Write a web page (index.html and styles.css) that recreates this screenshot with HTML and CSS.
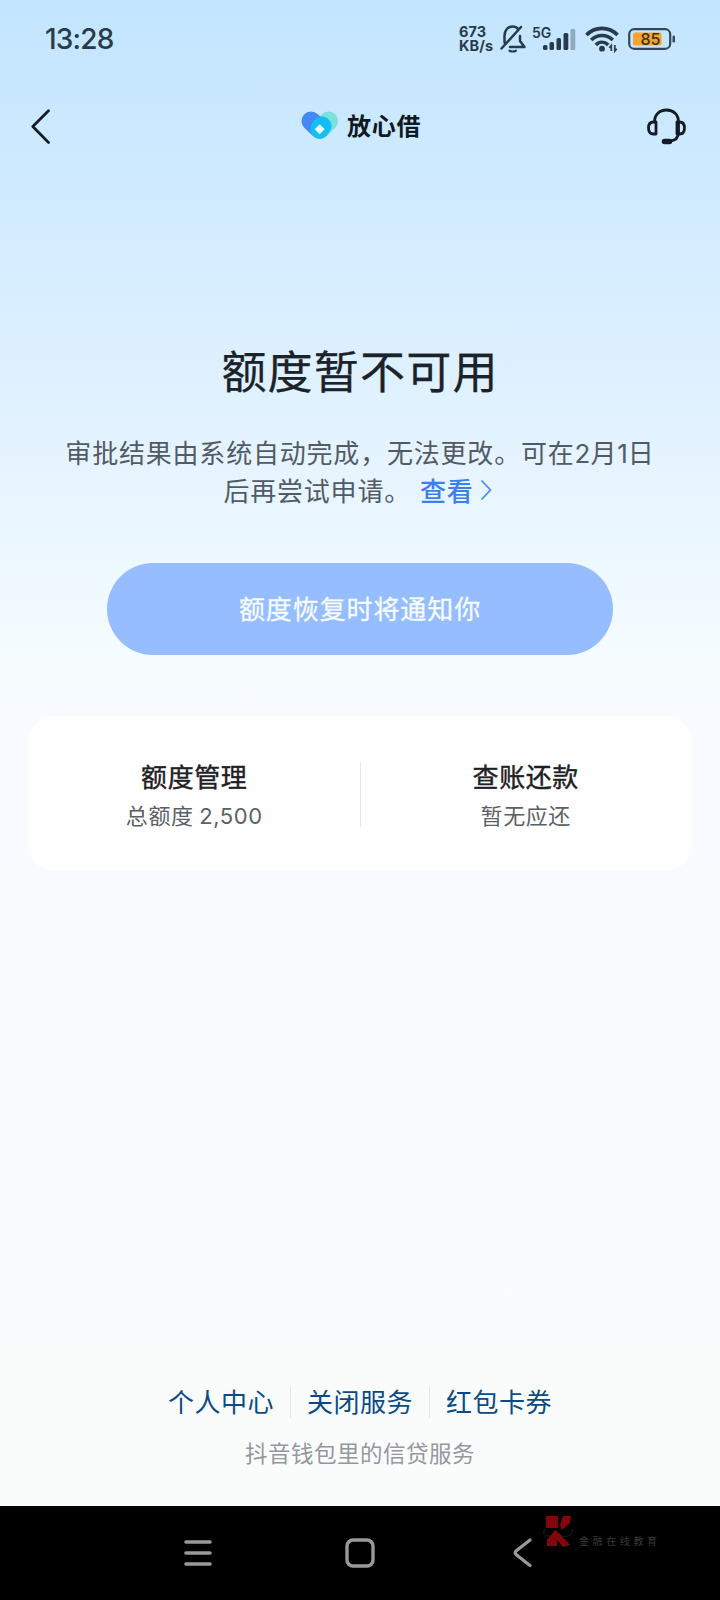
FILE: index.html
```html
<!DOCTYPE html>
<html lang="zh-CN">
<head>
<meta charset="utf-8">
<title>放心借</title>
<link rel="stylesheet" href="styles.css">
</head>
<body>
<div class="screen">
  <header class="status">
    <span class="clock">13:28</span>
    <div class="indicators">
      <div class="speed"><span>673</span><span>KB/s</span></div>
      <svg class="bell" width="26" height="30" viewBox="0 0 26 30" fill="none" stroke="#273b4a" stroke-width="2.500" stroke-linecap="round" stroke-linejoin="round">
        <path d="M4.500 18.500V12C4.500 6 8 2.500 12.500 2.500c2.500 0 4.500 1 5.800 2.800M10 23H24.500L20 17V12M21 3L1.500 24.500"/>
        <path d="M9.500 26.700q3.200 1.600 6.400 0" stroke-width="2.200"/>
      </svg>
      <div class="cell">
        <span class="net">5G</span>
        <svg class="bars" width="33" height="22" viewBox="0 0 33 22" fill="#273b4a">
          <rect x="0" y="16" width="4.500" height="5" rx="1.500"/><rect x="6.500" y="13" width="4.500" height="8" rx="1.500"/><rect x="13.500" y="9" width="4.500" height="12" rx="1.500"/><rect x="20.500" y="4" width="4.800" height="17" rx="1.500"/><rect x="27.500" y="0" width="4.800" height="21" rx="1.500" fill="#8fa9bd"/>
        </svg>
      </div>
      <svg class="wifi" width="34" height="27" viewBox="0 0 34 27" fill="none" stroke="#273b4a" stroke-width="3.600">
        <path d="M1.500 9C10 .2 24 .2 32.500 9M6.200 14C12.500 8 21.500 8 27.800 14M10.800 19C14.500 15.300 19.500 15.300 23.200 19"/>
        <circle cx="17" cy="22.700" r="2.900" fill="#273b4a" stroke="none"/>
        <path d="M26.300 25v-5.500l-2 2.300M29.800 19v6l2-2.300" stroke-width="1.700"/>
      </svg>
      <svg class="battery" width="48" height="22" viewBox="0 0 48 22">
        <rect x="1.200" y="1.200" width="41" height="19.600" rx="5" fill="none" stroke="#33485a" stroke-width="2.200"/>
        <rect x="5" y="4.500" width="28.500" height="13" rx="2" fill="#f5a52d"/>
        <rect x="44.500" y="7.500" width="2.500" height="7" rx="1.200" fill="#33485a"/>
        <text class="charge" x="22.500" y="16.800" text-anchor="middle">85</text>
      </svg>
    </div>
  </header>

  <nav class="topbar">
    <svg width="20" height="36" viewBox="0 0 20 36" fill="none" stroke="#151b22" stroke-width="2.700" stroke-linecap="round" stroke-linejoin="round"><path d="M17.500 2.700L1.800 18.500L17.500 34.500"/></svg>
    <div class="brand">
      <svg width="38" height="30" viewBox="0 0 38 30" fill="none" stroke-linecap="round">
        <path d="M27.500 10L19.500 18" stroke="#78e1dc" stroke-width="19"/>
        <path d="M10 10L18.500 18" stroke="#4588f4" stroke-width="19"/>
        <path d="M21 15L18.700 18.300" stroke="#12bff4" stroke-width="19"/>
        <path d="M18.700 13.300l5 5-5 5-5-5z" fill="#e9fbff"/>
      </svg>
      <span class="brand-name">放心借</span>
    </div>
    <svg width="39" height="37" viewBox="0 0 39 37" fill="none" stroke="#151b22" stroke-width="2.800" stroke-linecap="round" stroke-linejoin="round">
      <path d="M7.500 14C7.500 6.500 12.500 2 19.500 2S31.500 6.500 31.500 14v11M31.500 24c0 6-3 8.800-9 9"/>
      <path d="M9 14v12H6.500q-5 0-5-6t5-6zM30 14v12h2.500q5 0 5-6t-5-6z"/>
      <path d="M17.500 33.500h5" stroke-width="5.500"/>
    </svg>
  </nav>

  <main class="content">
    <h1 class="title">额度暂不可用</h1>
    <p class="desc">审批结果由系统自动完成，无法更改。可在<span class="num">2</span>月<span class="num">1</span>日<br>后再尝试申请。<a class="view">查看<svg width="12" height="22" viewBox="0 0 12 22" fill="none" stroke="#4b8cf0" stroke-width="1.800" stroke-linejoin="round"><path d="M1.500 1.500L10.500 11L1.500 20.500"/></svg></a></p>
    <button class="notify">额度恢复时将通知你</button>
    <section class="card">
      <div class="item"><strong>额度管理</strong><span>总额度 <b class="num">2,500</b></span></div>
      <div class="rule"></div>
      <div class="item"><strong>查账还款</strong><span>暂无应还</span></div>
    </section>
  </main>

  <footer class="footer">
    <div class="links"><a>个人中心</a><a>关闭服务</a><a>红包卡券</a></div>
    <p class="slogan">抖音钱包里的信贷服务</p>
  </footer>

  <div class="sysnav">
    <svg width="28" height="28" viewBox="0 0 28 28" stroke="#999" stroke-width="3.600" stroke-linecap="round"><path d="M2 3h24M2 14h24M2 25h24"/></svg>
    <svg width="30" height="30" viewBox="0 0 30 30" fill="none" stroke="#999" stroke-width="3.400"><rect x="2" y="2" width="26" height="26" rx="6"/></svg>
    <svg width="19" height="30" viewBox="0 0 19 30" fill="none" stroke="#999" stroke-width="3.200" stroke-linecap="round" stroke-linejoin="round"><path d="M17 2L3 13q-1.500 1.700 0 3.400L17 27.500"/></svg>
    <div class="watermark">
      <svg width="32" height="33" viewBox="0 0 32 33" fill="#84060c">
        <path d="M3 1h12v12H3zM17 10L20 1h8l-1 7-8 7zM4 31v-6l8-10 5 4 10 11-7 2-6-7v6z"/>
        <path d="M3 14c-5 4-1 8 5 7M18 21c6 2 13-2 11-7" fill="none" stroke="#202020" stroke-width="1"/>
      </svg>
      <span>金融在线教育</span>
    </div>
  </div>
</div>
</body>
</html>
```
FILE: styles.css
```css
* { box-sizing: border-box; }
body { margin: 0; font-family: "Noto Sans CJK SC", sans-serif; }
svg { display: block; flex: none; }
.screen {
  width: 720px; height: 1600px; display: flex; flex-direction: column;
  background: linear-gradient(#c3e5ff 0, #cbe9ff 130px, #dff1ff 380px, #ebf7ff 540px, #f6fcff 665px, #f8fbff 720px, #f8fbfe 960px, #fafcfc 1400px);
}
.status { height: 78px; padding: 0 44px 0 45px; display: flex; justify-content: space-between; align-items: center; color: #273b4a; }
.clock { font: 500 28px/40px Inter, sans-serif; letter-spacing: -.8px; }
.indicators { display: flex; align-items: center; }
.speed { display: flex; flex-direction: column; width: 42px; font: 700 14.500px/14px Inter, sans-serif; margin-right: -1px; letter-spacing: .1px; }
.cell { display: flex; margin-left: 6px; height: 26px; }
.net { font: 600 14px/14px Inter, sans-serif; width: 11px; }
.bars { margin-top: 3px; }
.wifi { margin-left: 9px; }
.battery { margin-left: 9px; }
.charge { font: 500 16px Inter, sans-serif; fill: #3d321f; }
.topbar { height: 96px; padding: 0 34px 0 31px; display: grid; grid-template-columns: 270px 1fr 39px; align-items: center; }
.brand { display: flex; align-items: center; gap: 8px; }
.brand-name { font-size: 24px; line-height: 34px; font-weight: 700; color: #101820; letter-spacing: .8px; margin-top: -2px; }
.content { display: flex; flex-direction: column; align-items: center; padding-top: 162px; }
.title { margin: 0; font-size: 45px; line-height: 68px; font-weight: 400; letter-spacing: 1.200px; color: #1b2229; -webkit-text-stroke: .25px #1b2229; }
.desc { margin: 29px 0 0; font-size: 26px; line-height: 38px; letter-spacing: .8px; text-align: center; color: #525a66; }
.num { font-family: Inter, sans-serif; font-weight: 400; line-height: 1; }
.desc .num { letter-spacing: 0; }
.view { display: inline-flex; align-items: center; gap: 6px; margin-left: 9px; padding-right: 5px; color: #3c7ff0; font-weight: 500; }
.notify { margin-top: 54px; width: 506px; height: 92px; border: 0; padding: 0 0 3px; border-radius: 46px; background: #96bdff; color: #f7fcff; font: 400 26px "Noto Sans CJK SC", sans-serif; letter-spacing: .9px; -webkit-text-stroke: .3px #f7fcff; }
.card { margin-top: 61px; width: 662px; height: 154px; border-radius: 24px; background: #fff; display: flex; align-items: center; }
.item { flex: 1; display: flex; flex-direction: column; align-items: center; padding-top: 1px; }
.item strong { font-size: 26px; line-height: 40px; font-weight: 400; -webkit-text-stroke: .4px #1d2024; color: #1d2024; letter-spacing: .6px; }
.item span { height: 36px; font-size: 22px; line-height: 36px; color: #5b5f66; letter-spacing: .6px; }
.rule { width: 1px; height: 65px; background: #e3e5e8; margin-top: 2px; }
.footer { margin-top: auto; height: 126px; display: flex; flex-direction: column; align-items: center; }
.links { display: flex; height: 44px; align-items: center; }
.links a { padding: 0 16px; height: 31px; font-size: 26px; line-height: 27px; letter-spacing: .5px; color: #0b4a85; border-left: 1px solid #e4e7ea; }
.links a:first-child { border-left: 0; }
.slogan { margin: 10px 0 0; font-size: 22.500px; line-height: 36px; letter-spacing: .5px; color: #94979d; }
.sysnav { height: 94px; padding-left: 184px; background: #000; display: flex; align-items: center; }
.sysnav > svg:nth-child(2) { margin-left: 133px; }
.sysnav > svg:nth-child(3) { margin-left: 138px; }
.watermark { display: flex; align-items: center; gap: 4px; margin: -43px 0 0 11px; }
.watermark span { font-size: 10px; line-height: 14px; letter-spacing: 3.600px; color: #3b3b3b; margin-top: 18px; white-space: nowrap; }
```
